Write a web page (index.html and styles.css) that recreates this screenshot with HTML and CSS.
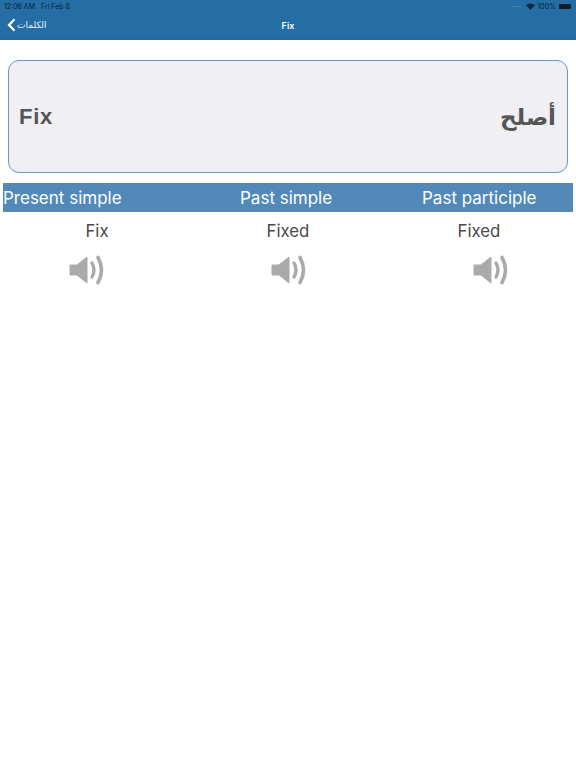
FILE: index.html
```html
<!DOCTYPE html>
<html>

<head>
    <title>Fix</title>
    <link rel="stylesheet" href="styles.css">
</head>

<body>

    <div class="top-bar">
        <div class="status-row">
            <div class="status-left">
                <span>12:06 AM</span>
                <span>Fri Feb 8</span>
            </div>
            <div class="status-right">
                <span class="signal"></span>
                <svg class="wifi" width="9" height="7" viewBox="0 0 9 7">
                    <path d="M0 2.2 A6.5 6.5 0 0 1 9 2.2 L4.5 7 Z" fill="#12283d"/>
                </svg>
                <span>100%</span>
                <span class="battery"></span>
            </div>
        </div>
        <div class="nav-row">
            <div class="back">
                <svg width="9" height="14" viewBox="0 0 9 14">
                    <path d="M7.5 1.2 L2 7 L7.5 12.8" fill="none" stroke="#fff" stroke-width="2.2"/>
                </svg>
                <span class="back-label">الكلمات</span>
            </div>
            <div class="nav-title">Fix</div>
        </div>
    </div>

    <div class="word-card">
        <span class="word-en">Fix</span>
        <span class="word-ar">أصلح</span>
    </div>

    <div class="tense-head">
        <div class="tense-col first">Present simple</div>
        <div class="tense-col second">Past simple</div>
        <div class="tense-col third">Past participle</div>
    </div>

    <div class="forms">
        <div class="form-word">Fix</div>
        <div class="form-word">Fixed</div>
        <div class="form-word">Fixed</div>
    </div>

    <div class="speakers">
        <svg class="speaker" width="36" height="30" viewBox="0 0 36 30">
            <path d="M1 10 H8 L18 2 V28 L8 20 H1 Z" fill="#aaa" stroke="#aaa" stroke-linejoin="round"/>
            <path d="M23 8 Q27 15 23 22" fill="none" stroke="#aaa" stroke-width="3.4" stroke-linecap="round"/>
            <path d="M29 2.5 Q36 15 29 27.5" fill="none" stroke="#aaa" stroke-width="3.6" stroke-linecap="round"/>
        </svg>
        <svg class="speaker" width="36" height="30" viewBox="0 0 36 30">
            <path d="M1 10 H8 L18 2 V28 L8 20 H1 Z" fill="#aaa" stroke="#aaa" stroke-linejoin="round"/>
            <path d="M23 8 Q27 15 23 22" fill="none" stroke="#aaa" stroke-width="3.4" stroke-linecap="round"/>
            <path d="M29 2.5 Q36 15 29 27.5" fill="none" stroke="#aaa" stroke-width="3.6" stroke-linecap="round"/>
        </svg>
        <svg class="speaker" width="36" height="30" viewBox="0 0 36 30">
            <path d="M1 10 H8 L18 2 V28 L8 20 H1 Z" fill="#aaa" stroke="#aaa" stroke-linejoin="round"/>
            <path d="M23 8 Q27 15 23 22" fill="none" stroke="#aaa" stroke-width="3.4" stroke-linecap="round"/>
            <path d="M29 2.5 Q36 15 29 27.5" fill="none" stroke="#aaa" stroke-width="3.6" stroke-linecap="round"/>
        </svg>
    </div>

</body>

</html>
```

FILE: styles.css
```css
* {
    box-sizing: border-box;
}

body {
    margin: 0;
    background: #fff;
    font-family: 'Inter', 'Liberation Sans', sans-serif;
}

.top-bar {
    height: 40px;
    background-color: #246da5;
    border-bottom: 1px solid #2a6696;
}

.status-row {
    display: flex;
    justify-content: space-between;
    align-items: center;
    height: 12px;
    padding: 1px 5px 0 4px;
    font-size: 7px;
    color: #0f2234;
}

.status-left {
    display: flex;
    gap: 6px;
}

.status-right {
    display: flex;
    align-items: center;
    gap: 2px;
}

.signal {
    width: 8px;
    height: 1px;
    margin-right: 3px;
    background: #4d7fa8;
}

.battery {
    width: 12px;
    height: 5px;
    margin-left: 1px;
    background: #0d1b2a;
    border-radius: 1px;
}

.nav-row {
    position: relative;
    display: flex;
    align-items: center;
    justify-content: center;
    height: 27px;
    color: #fff;
}

.back {
    position: absolute;
    left: 7px;
    top: 6px;
    display: flex;
    align-items: center;
    gap: 1px;
}

.back-label {
    font-family: 'DejaVu Sans', sans-serif;
    font-size: 9px;
    color: #e8f0f6;
}

.nav-title {
    font-size: 9px;
    font-weight: 600;
}

.word-card {
    display: flex;
    justify-content: space-between;
    align-items: center;
    height: 113px;
    margin: 20px 8px 10px;
    padding: 0 11px 0 10px;
    background-color: #efeff4;
    border: 1px solid #6a96c4;
    border-radius: 11px;
    color: #555;
    font-weight: 700;
}

.word-en {
    font-family: 'Liberation Sans', sans-serif;
    font-size: 22px;
    letter-spacing: 0.7px;
}

.word-ar {
    font-family: 'DejaVu Sans', sans-serif;
    font-size: 23px;
}

.tense-head {
    display: flex;
    height: 29px;
    margin: 0 3px;
    background-color: #5289b9;
    color: #fff;
    font-size: 17px;
    line-height: 30px;
}

.tense-col {
    white-space: nowrap;
}

.first {
    width: 237px;
}

.second {
    width: 182px;
}

.forms {
    display: grid;
    grid-template-columns: 194px 188px 194px;
    margin-top: 9px;
    color: #4a4a4a;
    font-size: 16.8px;
    text-align: center;
}

.form-word {
    height: 21px;
    line-height: 21px;
}

.speakers {
    display: flex;
    gap: 166px;
    margin-top: 13px;
    padding-left: 69px;
}
```
